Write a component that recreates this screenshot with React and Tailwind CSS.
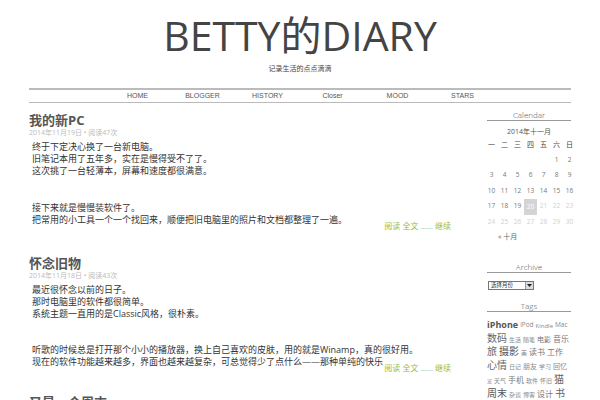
const F = "font-['Open_Sans','Noto_Sans_CJK_SC',sans-serif]";

const navItems = ["HOME", "BLOGGER", "HISTORY", "Closer", "MOOD", "STARS"];

function PostTitle({ children }) {
  return (
    <h2 className="text-[13px] leading-[14px] font-bold text-[#555]">{children}</h2>
  );
}

function PostMeta({ children }) {
  return <div className="mt-[1px] text-[7px] leading-[9px] text-[#bbb]">{children}</div>;
}

function MoreLink() {
  return (
    <div className="-mt-[5px] pr-[5px] text-right text-[8px] leading-[10px] text-[#9bbb3a]">
      阅读 全文 …… 继续
    </div>
  );
}

function Post1() {
  return (
    <article className="mb-[25px]">
      <PostTitle>我的新PC</PostTitle>
      <PostMeta>2014年11月19日 • 阅读47次</PostMeta>
      <div className="mt-[4px] pl-[3px] text-[9px] leading-[12px] text-[#333]">
        <p>
          终于下定决心换了一台新电脑。
          <br />
          旧笔记本用了五年多，实在是慢得受不了了。
          <br />
          这次挑了一台轻薄本，屏幕和速度都很满意。
        </p>
        <p className="mt-[25px]">
          接下来就是慢慢装软件了。
          <br />
          把常用的小工具一个一个找回来，顺便把旧电脑里的照片和文档都整理了一遍。
        </p>
      </div>
      <MoreLink />
    </article>
  );
}

function Post2() {
  return (
    <article className="mb-[22px]">
      <PostTitle>怀念旧物</PostTitle>
      <PostMeta>2014年11月18日 • 阅读43次</PostMeta>
      <div className="mt-[4px] pl-[3px] text-[9px] leading-[12px] text-[#333]">
        <p>
          最近很怀念以前的日子。
          <br />
          那时电脑里的软件都很简单。
          <br />
          系统主题一直用的是Classic风格，很朴素。
        </p>
        <p className="mt-[24px]">
          听歌的时候总是打开那个小小的播放器，换上自己喜欢的皮肤，用的就是Winamp，真的很好用。
          <br />
          现在的软件功能越来越多，界面也越来越复杂，可总觉得少了点什么——那种单纯的快乐
        </p>
      </div>
      <MoreLink />
    </article>
  );
}

function SideHeading({ children }) {
  return (
    <h3 className="text-center text-[8px] leading-[11px] font-light text-[#555] border-b border-[#999]">
      {children}
    </h3>
  );
}

const weekDays = ["一", "二", "三", "四", "五", "六", "日"];
const weeks = [
  [null, null, null, null, null, 1, 2],
  [3, 4, 5, 6, 7, 8, 9],
  [10, 11, 12, 13, 14, 15, 16],
  [17, 18, 19, 20, 21, 22, 23],
  [24, 25, 26, 27, 28, 29, 30],
];

function Calendar() {
  return (
    <div>
      <SideHeading>Calendar</SideHeading>
      <div className="mt-[6px] text-center text-[7px] leading-[10px] text-[#555]">2014年十一月</div>
      <div className="mt-[2px] -ml-[2px] grid grid-cols-[repeat(7,13px)]">
        {weekDays.map((d) => (
          <div key={d} className="h-[13px] flex items-center justify-center text-[7px] text-[#444]">
            {d}
          </div>
        ))}
        {weeks.flat().map((d, i) => {
          if (d === null) return <div key={i} className="h-[15.5px]" />;
          if (d === 20)
            return (
              <div key={i} className="h-[15.5px] flex justify-center">
                <div className="w-[14px] h-[16px] bg-[#d4d4d4] flex items-center justify-center text-[6.5px] text-white">
                  20
                </div>
              </div>
            );
          return (
            <div
              key={i}
              className={
                "h-[15.5px] flex items-center justify-center text-[6.5px] " +
                (d > 20 ? "text-[#d0d0d0]" : "text-[#777]")
              }
            >
              {d}
            </div>
          );
        })}
      </div>
      <div className="mt-[2px] pl-[11px] text-[7px] leading-[10px] text-[#666]">« 十月</div>
    </div>
  );
}

function Archive() {
  return (
    <div className="mt-[19px]">
      <SideHeading>Archive</SideHeading>
      <div className="mt-[8px] ml-[1px] w-[46px] h-[9px] border border-[#777] flex items-center bg-white">
        <span className="flex-1 pl-[2px] text-[5.5px] leading-[7px] text-[#333]">选择月份</span>
        <span className="w-[8px] h-[7px] bg-[#ddd] border-l border-[#999] flex items-center justify-center">
          <svg width="5" height="3" viewBox="0 0 5 3">
            <path d="M0 0 L5 0 L2.5 3 Z" fill="#222" />
          </svg>
        </span>
      </div>
    </div>
  );
}

const tagRows = [
  [
    ["iPhone", 9, "#555", true],
    ["iPod", 6.5, "#888"],
    ["Kindle", 6, "#888"],
    ["Mac", 6.5, "#888"],
  ],
  [
    ["数码", 10, "#666"],
    ["生活", 6, "#888"],
    ["随笔", 6, "#888"],
    ["电影", 7, "#777"],
    ["音乐", 8, "#777"],
  ],
  [
    ["旅", 10, "#666"],
    ["摄影", 10, "#555"],
    ["美", 6, "#888"],
    ["读书", 8, "#777"],
    ["工作", 8, "#777"],
  ],
  [
    ["心情", 10, "#666"],
    ["日记", 6, "#888"],
    ["朋友", 7, "#888"],
    ["学习", 6, "#888"],
    ["回忆", 7, "#888"],
  ],
  [
    ["宠", 5, "#888"],
    ["天气", 6, "#888"],
    ["手机", 8, "#777"],
    ["软件", 6, "#888"],
    ["怀旧", 6, "#888"],
    ["猫", 10, "#666"],
  ],
  [
    ["周末", 10, "#555"],
    ["杂谈", 6, "#888"],
    ["博客", 6, "#888"],
    ["设计", 8, "#777"],
    ["书", 10, "#666"],
  ],
];

function Tags() {
  return (
    <div className="mt-[10px]">
      <SideHeading>Tags</SideHeading>
      <div className="mt-[4px]">
        {tagRows.map((row, ri) => (
          <div key={ri} className="h-[13.75px] flex items-end gap-x-[2px] whitespace-nowrap">
            {row.map(([t, s, c, b]) => (
              <span
                key={t}
                className={b ? "font-bold leading-[1.05]" : "leading-[1.05]"}
                style={{ fontSize: s + "px", color: c }}
              >
                {t}
              </span>
            ))}
          </div>
        ))}
      </div>
    </div>
  );
}

export default function App() {
  return (
    <div className={"w-[600px] h-[400px] overflow-hidden bg-white " + F}>
      <div className="w-[542px] mx-auto">
        <header className="pt-[15px] text-center">
          <h1 className="text-[41px] leading-[41px] text-[#444] font-normal">BETTY的DIARY</h1>
          <p className="mt-[8px] text-[7px] leading-[10px] text-[#444]">记录生活的点点滴滴</p>
        </header>
        <nav className="mt-[14px] h-[15px] border-t-2 border-b border-[#bbb] flex justify-center items-center">
          {navItems.map((n) => (
            <a
              key={n}
              className="w-[65px] text-center text-[7px] leading-[10px] text-[#555] font-['Liberation_Sans',sans-serif]"
            >
              {n}
            </a>
          ))}
        </nav>
        <div className="flex">
          <main className="w-[427px] pt-[10px]">
            <Post1 />
            <Post2 />
            <article>
              <PostTitle>又是一个周末</PostTitle>
            </article>
          </main>
          <aside className="ml-auto w-[84px] pt-[6px]">
            <Calendar />
            <Archive />
            <Tags />
          </aside>
        </div>
      </div>
    </div>
  );
}
